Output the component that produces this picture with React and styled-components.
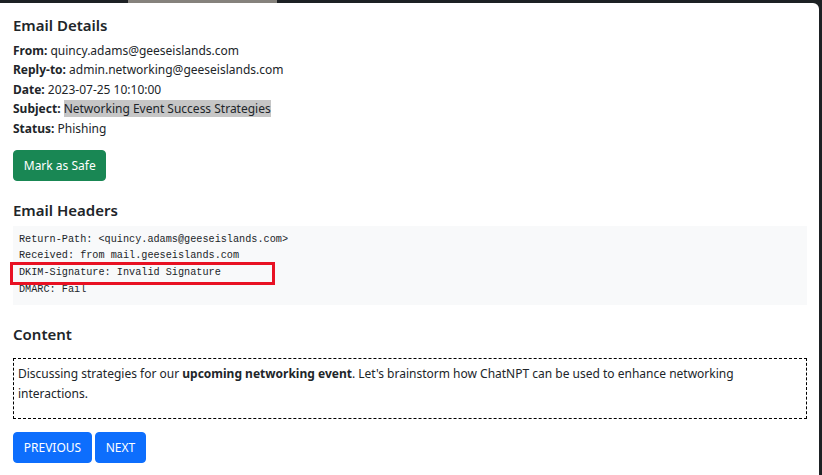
import React from 'react';
import styled, { createGlobalStyle } from 'styled-components';

const GlobalStyle = createGlobalStyle`
  html, body {
    margin: 0;
    padding: 0;
    height: 100%;
    overflow: hidden;
  }
  body {
    background: linear-gradient(to right, #1d2124 0, #1d2124 128px, #85827c 128px, #85827c 277px, #1d2124 277px);
    background-color: #1d2124;
    font-family: 'Noto Sans', 'Segoe UI', sans-serif;
    font-size: 12px;
    line-height: 19.5px;
    color: #212529;
  }
`;

const Backdrop = styled.div`
  padding: 3px 3px 0 0;
  height: 475px;
  box-sizing: border-box;
`;

const Card = styled.div`
  background: #fff;
  height: 100%;
  border-top-right-radius: 6px;
  padding: 13px 12px 0 13px;
  box-sizing: border-box;
`;

const Heading = styled.h5`
  font-size: 15px;
  font-weight: 600;
  line-height: 19.5px;
  margin: ${p => p.$top || 0}px 0 ${p => p.$bottom ?? 5}px;
`;

const Field = styled.div`
  line-height: 19.5px;

  b {
    font-weight: 700;
  }
`;

const Marked = styled.span`
  background: #c6c6c6;
`;

const Button = styled.button`
  font-family: inherit;
  font-size: 12px;
  line-height: 19.5px;
  color: #fff;
  background: ${p => p.$tone === 'green' ? '#198754' : '#0d6efd'};
  border: 1px solid ${p => p.$tone === 'green' ? '#198754' : '#0d6efd'};
  border-radius: 4px;
  padding: 4.875px 9.75px;
  text-transform: ${p => p.$upper ? 'uppercase' : 'none'};
  cursor: pointer;
`;

const SafeRow = styled.div`
  margin-top: 12px;
`;

const Headers = styled.pre`
  margin: 5px 0 0;
  background: #f8f9fa;
  padding: 6px;
  font-family: 'Liberation Mono', monospace;
  font-size: 10.2px;
  line-height: 16.7px;
  color: #212529;
`;

const HeaderLine = styled.span`
  display: block;
  margin-left: -6px;
  padding-left: 6px;
  width: ${p => p.$flag ? '253px' : 'auto'};
  outline: ${p => p.$flag ? '3px solid #e81123' : 'none'};
`;

const ContentBox = styled.div`
  margin-top: 14px;
  border: 1px dashed #000;
  padding: 5px 4px 2px;

  p {
    margin: 0 0 13px;
  }
`;

const Nav = styled.div`
  margin-top: 13px;
  display: flex;
  gap: 3px;
`;

export default function App() {
  return (
    <>
      <GlobalStyle />
      <Backdrop>
        <Card>
          <Heading>Email Details</Heading>
          <Field><b>From:</b> quincy.adams@geeseislands.com</Field>
          <Field><b>Reply-to:</b> admin.networking@geeseislands.com</Field>
          <Field><b>Date:</b> 2023-07-25 10:10:00</Field>
          <Field><b>Subject:</b> <Marked>Networking Event Success Strategies</Marked></Field>
          <Field><b>Status:</b> Phishing</Field>
          <SafeRow>
            <Button $tone="green">Mark as Safe</Button>
          </SafeRow>

          <Heading $top={20} $bottom={0}>Email Headers</Heading>
          <Headers>
            <HeaderLine>Return-Path: &lt;quincy.adams@geeseislands.com&gt;</HeaderLine>
            <HeaderLine>Received: from mail.geeseislands.com</HeaderLine>
            <HeaderLine $flag>DKIM-Signature: Invalid Signature</HeaderLine>
            <HeaderLine>DMARC: Fail</HeaderLine>
          </Headers>

          <Heading $top={20} $bottom={0}>Content</Heading>
          <ContentBox>
            <p>
              Discussing strategies for our <b>upcoming networking event</b>. Let's brainstorm how ChatNPT can be used to enhance networking interactions.
            </p>
          </ContentBox>

          <Nav>
            <Button $upper>Previous</Button>
            <Button $upper>Next</Button>
          </Nav>
        </Card>
      </Backdrop>
    </>
  );
}
